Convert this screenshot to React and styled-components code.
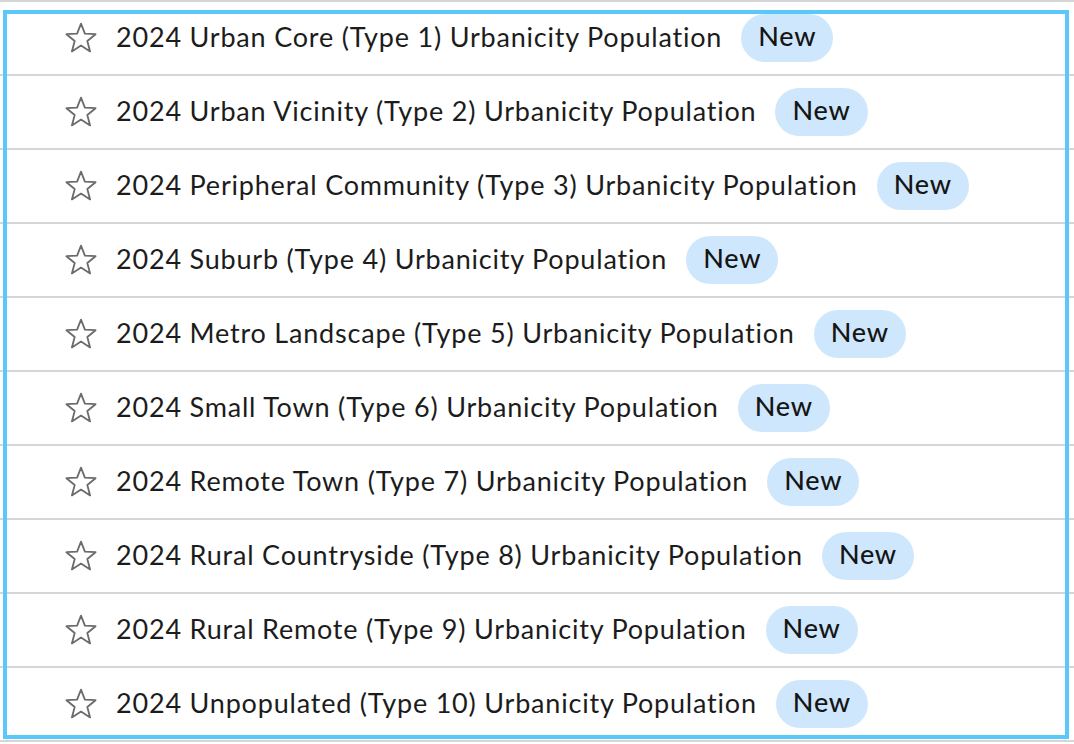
import React from "react";
import styled, { createGlobalStyle } from "styled-components";

const Global = createGlobalStyle`
  html, body { margin: 0; padding: 0; background: #ffffff; }
  body { font-family: Lato, "Open Sans", sans-serif; color: #1c1c1c; }
`;

const List = styled.ul`
  position: relative;
  list-style: none;
  margin: 0;
  padding: 0;
  border-top: 2px solid #d6d6d6;
  &::after {
    content: "";
    position: absolute;
    top: 8px;
    left: 3px;
    right: 5px;
    bottom: 3px;
    border: 4px solid #5ac8fa;
    pointer-events: none;
  }
`;

const Row = styled.li`
  display: flex;
  align-items: center;
  height: 72px;
  border-bottom: 2px solid #d6d6d6;
  padding-left: 64px;
  box-sizing: content-box;
`;

const StarIcon = styled.svg`
  width: 34px;
  height: 34px;
  flex: none;
  margin-right: 18px;
`;

const Label = styled.span`
  font-size: 27px;
  letter-spacing: 0.8px;
  line-height: 1;
  padding-bottom: 3px;
  color: #1c1c1c;
  white-space: nowrap;
`;

const Badge = styled.span`
  margin-left: 19px;
  height: 48px;
  padding: 0 17px 5px;
  box-sizing: border-box;
  border-radius: 24px;
  background: #cfe7fc;
  color: #151515;
  font-size: 27px;
  letter-spacing: 0.8px;
  display: inline-flex;
  align-items: center;
  font-weight: 500;
`;

const Star = () => (
  <StarIcon viewBox="0 0 34 34">
    <path
      d="M17 2.6 L20.9 12.6 L31.6 13.2 L23.3 20 L26.1 30.4 L17 24.6 L7.9 30.4 L10.7 20 L2.4 13.2 L13.1 12.6 Z"
      fill="none"
      stroke="#6b6b6b"
      strokeWidth="1.8"
      strokeLinejoin="round"
    />
  </StarIcon>
);

const items = [
  "2024 Urban Core (Type 1) Urbanicity Population",
  "2024 Urban Vicinity (Type 2) Urbanicity Population",
  "2024 Peripheral Community (Type 3) Urbanicity Population",
  "2024 Suburb (Type 4) Urbanicity Population",
  "2024 Metro Landscape (Type 5) Urbanicity Population",
  "2024 Small Town (Type 6) Urbanicity Population",
  "2024 Remote Town (Type 7) Urbanicity Population",
  "2024 Rural Countryside (Type 8) Urbanicity Population",
  "2024 Rural Remote (Type 9) Urbanicity Population",
  "2024 Unpopulated (Type 10) Urbanicity Population",
];

export default function App() {
  return (
    <>
      <Global />
      <List>
        {items.map((t) => (
          <Row key={t}>
            <Star />
            <Label>{t}</Label>
            <Badge>New</Badge>
          </Row>
        ))}
      </List>
    </>
  );
}
